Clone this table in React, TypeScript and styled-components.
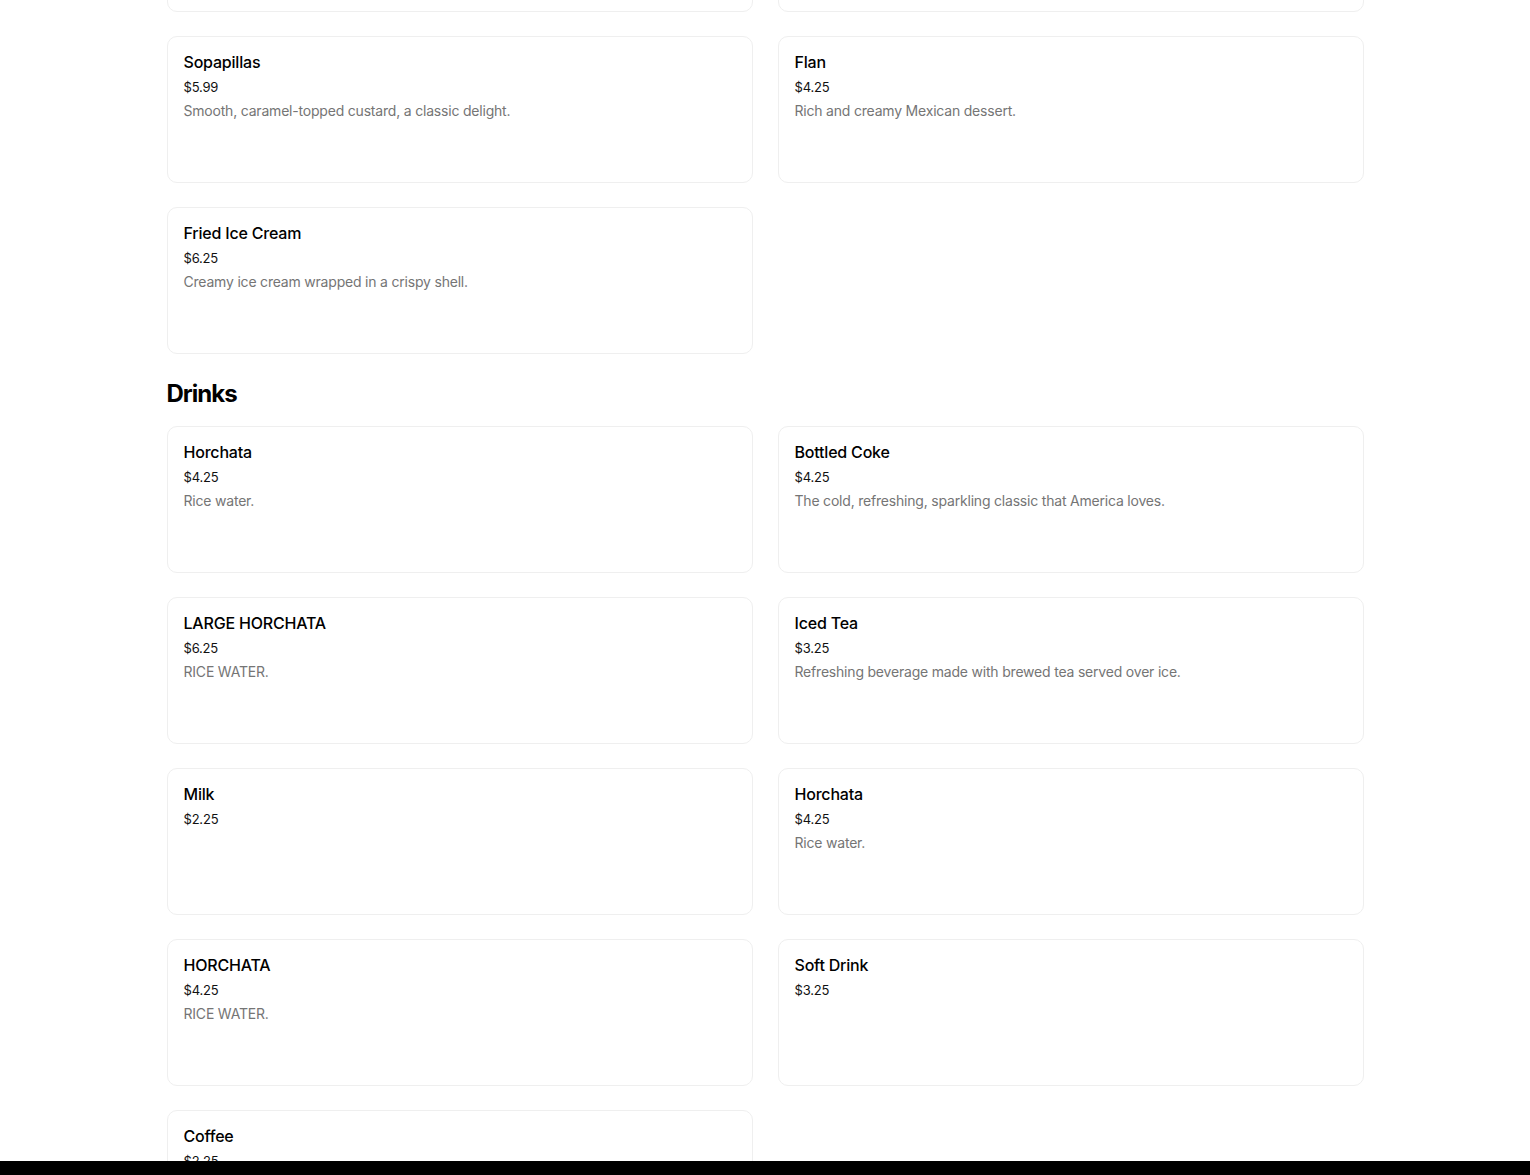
import React from 'react';
import styled, { createGlobalStyle } from 'styled-components';

const GlobalStyle = createGlobalStyle`
  html, body {
    margin: 0;
    padding: 0;
    background: #ffffff;
  }
  body {
    font-family: Inter, "Noto Sans", "Liberation Sans", sans-serif;
    color: #000000;
    overflow: hidden;
  }
`;

const Page = styled.main`
  box-sizing: border-box;
  width: 1197px;
  margin: -135px auto 0;
`;

const Section = styled.section``;

const SectionTitle = styled.h2`
  margin: 24px 0 16px;
  font-size: 24px;
  line-height: 32px;
  font-weight: 700;
  letter-spacing: -1px;
`;

const Grid = styled.div`
  display: grid;
  grid-template-columns: 1fr 1fr;
  gap: 24px 25px;
`;

const Card = styled.article`
  box-sizing: border-box;
  height: 147px;
  padding: 15px 16px;
  border: 1px solid #efefef;
  border-radius: 10px;
  background: #ffffff;
`;

const Name = styled.div`
  font-size: 16px;
  line-height: 20px;
  font-weight: 500;
  letter-spacing: -0.2px;
  color: #000000;
`;

const Price = styled.div`
  margin-top: 5px;
  font-size: 13px;
  line-height: 20px;
  letter-spacing: -0.2px;
  color: #111111;
`;

const Description = styled.div`
  margin-top: 4px;
  font-size: 14px;
  line-height: 20px;
  letter-spacing: -0.2px;
  color: #757575;
`;

const BottomBar = styled.div`
  position: fixed;
  left: 0;
  right: 0;
  bottom: 0;
  height: 14px;
  background: #000000;
`;

type Item = { name: string; price: string; description?: string };

const desserts: Item[] = [
  { name: 'Churros', price: '$4.99', description: 'Fried dough dusted with cinnamon sugar.' },
  { name: 'Tres Leches', price: '$5.25', description: 'Sponge cake soaked in three kinds of milk.' },
  { name: 'Sopapillas', price: '$5.99', description: 'Smooth, caramel-topped custard, a classic delight.' },
  { name: 'Flan', price: '$4.25', description: 'Rich and creamy Mexican dessert.' },
  { name: 'Fried Ice Cream', price: '$6.25', description: 'Creamy ice cream wrapped in a crispy shell.' },
];

const drinks: Item[] = [
  { name: 'Horchata', price: '$4.25', description: 'Rice water.' },
  { name: 'Bottled Coke', price: '$4.25', description: 'The cold, refreshing, sparkling classic that America loves.' },
  { name: 'LARGE HORCHATA', price: '$6.25', description: 'RICE WATER.' },
  { name: 'Iced Tea', price: '$3.25', description: 'Refreshing beverage made with brewed tea served over ice.' },
  { name: 'Milk', price: '$2.25' },
  { name: 'Horchata', price: '$4.25', description: 'Rice water.' },
  { name: 'HORCHATA', price: '$4.25', description: 'RICE WATER.' },
  { name: 'Soft Drink', price: '$3.25' },
  { name: 'Coffee', price: '$2.25' },
];

const MenuCard: React.FC<{ item: Item }> = ({ item }) => (
  <Card>
    <Name>{item.name}</Name>
    <Price>{item.price}</Price>
    {item.description && <Description>{item.description}</Description>}
  </Card>
);

const App: React.FC = () => {
  return (
    <>
      <GlobalStyle />
      <Page>
        <Section>
          <Grid>
            {desserts.map((item, i) => (
              <MenuCard key={i} item={item} />
            ))}
          </Grid>
        </Section>
        <Section>
          <SectionTitle>Drinks</SectionTitle>
          <Grid>
            {drinks.map((item, i) => (
              <MenuCard key={i} item={item} />
            ))}
          </Grid>
        </Section>
      </Page>
      <BottomBar />
    </>
  );
};

export default App;
